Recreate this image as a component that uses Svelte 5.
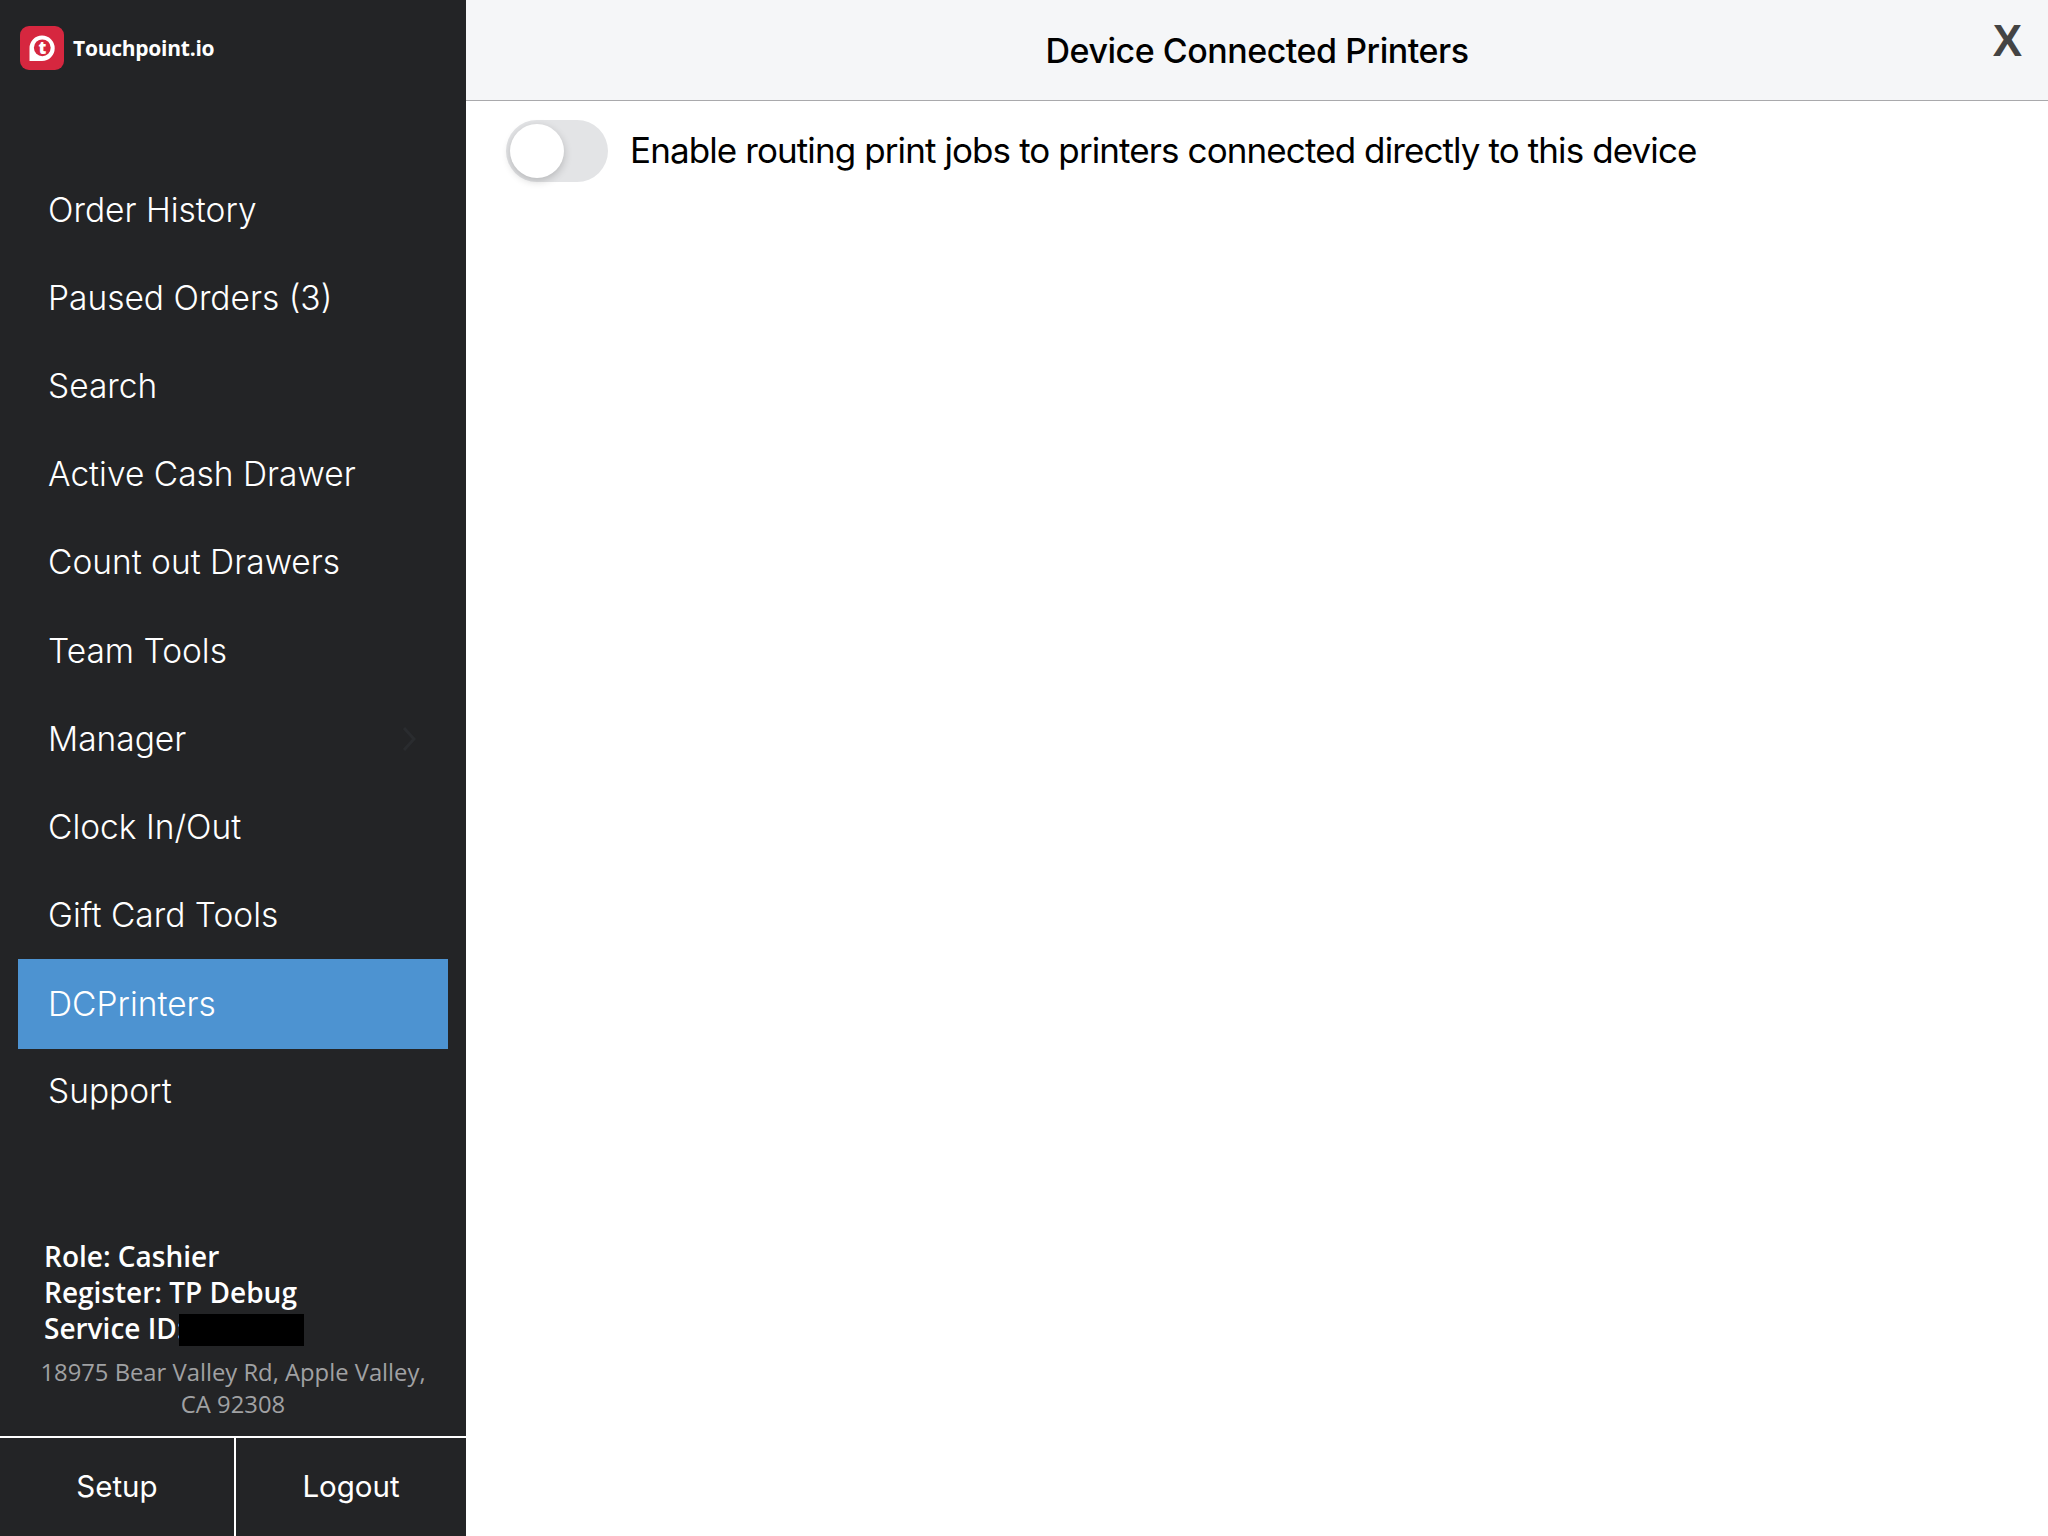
<script>
  const items = [
    { label: 'Order History' },
    { label: 'Paused Orders (3)' },
    { label: 'Search' },
    { label: 'Active Cash Drawer' },
    { label: 'Count out Drawers' },
    { label: 'Team Tools' },
    { label: 'Manager', chevron: true },
    { label: 'Clock In/Out' },
    { label: 'Gift Card Tools' },
    { label: 'DCPrinters', active: true },
    { label: 'Support' }
  ];
</script>

<div class="app">
  <aside class="sidebar">
    <div class="brand">
      <svg class="logo" viewBox="0 0 44 44" aria-hidden="true">
        <rect width="44" height="44" rx="9" fill="#d6273f" />
        <path d="M22 9.500a12.700 12.700 0 1 1 0 25.400H9.500V22A12.500 12.500 0 0 1 22 9.500z" fill="#fff" />
        <circle cx="22.300" cy="21.800" r="8.400" fill="#d6273f" />
        <text x="22.300" y="27.500" class="logo-t">t</text>
      </svg>
      <span class="brand-name">Touchpoint.io</span>
    </div>

    <nav class="nav">
      {#each items as item}
        <div class="nav-item" class:active={item.active}>
          <span>{item.label}</span>
          {#if item.chevron}
            <svg class="chevron" viewBox="0 0 14 26" aria-hidden="true">
              <path d="M2 2l10 11L2 24" fill="none" stroke="#2a2c2f" stroke-width="3" />
            </svg>
          {/if}
        </div>
      {/each}
    </nav>

    <div class="info">
      <div class="info-line">Role: Cashier</div>
      <div class="info-line">Register: TP Debug</div>
      <div class="info-line service">Service ID:<span class="redacted"></span></div>
    </div>
    <div class="address">18975 Bear Valley Rd, Apple Valley, CA 92308</div>

    <div class="actions">
      <div class="action">Setup</div>
      <div class="action">Logout</div>
    </div>
  </aside>

  <main class="main">
    <header class="header">
      <span></span>
      <h1>Device Connected Printers</h1>
      <span class="close">X</span>
    </header>
    <div class="setting">
      <div class="toggle"><div class="knob"></div></div>
      <span class="setting-label">Enable routing print jobs to printers connected directly to this device</span>
    </div>
  </main>
</div>

<style>
  :global(body) {
    background: #fff;
  }

  .app {
    display: flex;
    width: 2048px;
    height: 1536px;
    overflow: hidden;
    font-family: Inter, "Liberation Sans", sans-serif;
  }

  .sidebar {
    width: 466px;
    flex-shrink: 0;
    background: #232426;
    display: flex;
    flex-direction: column;
    color: #fff;
  }

  .brand {
    display: flex;
    align-items: center;
    gap: 9px;
    padding: 26px 0 0 20px;
    height: 44px;
  }

  .logo {
    width: 44px;
    height: 44px;
  }

  .logo-t {
    font-family: "Open Sans", sans-serif;
    font-weight: 800;
    font-size: 17px;
    fill: #fff;
    text-anchor: middle;
  }

  .brand-name {
    font-family: "Open Sans", sans-serif;
    font-size: 21px;
    font-weight: 700;
    letter-spacing: -0.250px;
  }

  .nav {
    margin-top: 96px;
    padding: 0 18px;
    display: flex;
    flex-direction: column;
  }

  .nav-item {
    height: 88.100px;
    padding-left: 30px;
    display: flex;
    align-items: center;
    justify-content: space-between;
    font-size: 33.500px;
    font-weight: 300;
  }

  .nav-item.active {
    background: #4d93d1;
    height: 90px;
    margin-bottom: -1.900px;
  }

  .chevron {
    width: 14px;
    height: 26px;
    margin-right: 32px;
  }

  .info {
    margin-top: auto;
    padding-left: 44px;
    font-family: "Open Sans", sans-serif;
    font-size: 28px;
    font-weight: 560;
    line-height: 36px;
  }

  .service {
    display: flex;
    align-items: center;
  }

  .redacted {
    width: 125px;
    height: 32px;
    margin: 4px 0 0 -5px;
    background: #000;
  }

  .address {
    margin-top: 10px;
    padding: 0 30px;
    text-align: center;
    font-family: "Open Sans", sans-serif;
    font-size: 23.800px;
    line-height: 32px;
    color: #a0a1a3;
  }

  .actions {
    margin-top: 16px;
    height: 98px;
    border-top: 2px solid #fff;
    display: grid;
    grid-template-columns: 236px 1fr;
  }

  .action {
    display: flex;
    align-items: center;
    justify-content: center;
    padding-bottom: 2px;
    font-size: 29.500px;
    font-weight: 400;
  }

  .action:first-child {
    border-right: 2px solid #fff;
  }

  .main {
    flex: 1;
    display: flex;
    flex-direction: column;
  }

  .header {
    height: 100px;
    background: #f5f6f8;
    border-bottom: 1px solid #a9a9ac;
    display: grid;
    grid-template-columns: 1fr auto 1fr;
    align-items: center;
  }

  h1 {
    margin: 0;
    font-size: 34px;
    font-weight: 500;
    letter-spacing: -0.480px;
    color: #000;
  }

  .close {
    justify-self: end;
    align-self: start;
    padding: 16px 26px 0 0;
    font-family: "Liberation Sans", sans-serif;
    font-weight: 700;
    font-size: 44px;
    color: #444;
  }

  .setting {
    display: flex;
    align-items: center;
    gap: 22px;
    padding: 19px 0 0 40px;
  }

  .toggle {
    width: 102px;
    height: 62px;
    border-radius: 31px;
    background: #e3e4e6;
    box-sizing: border-box;
    padding: 4px;
  }

  .knob {
    width: 54px;
    height: 54px;
    border-radius: 50%;
    background: #fff;
    box-shadow: 0 3px 8px rgba(0, 0, 0, 0.2);
  }

  .setting-label {
    font-size: 35px;
    font-weight: 400;
    letter-spacing: -0.900px;
    padding-bottom: 2px;
    color: #000;
  }
</style>
